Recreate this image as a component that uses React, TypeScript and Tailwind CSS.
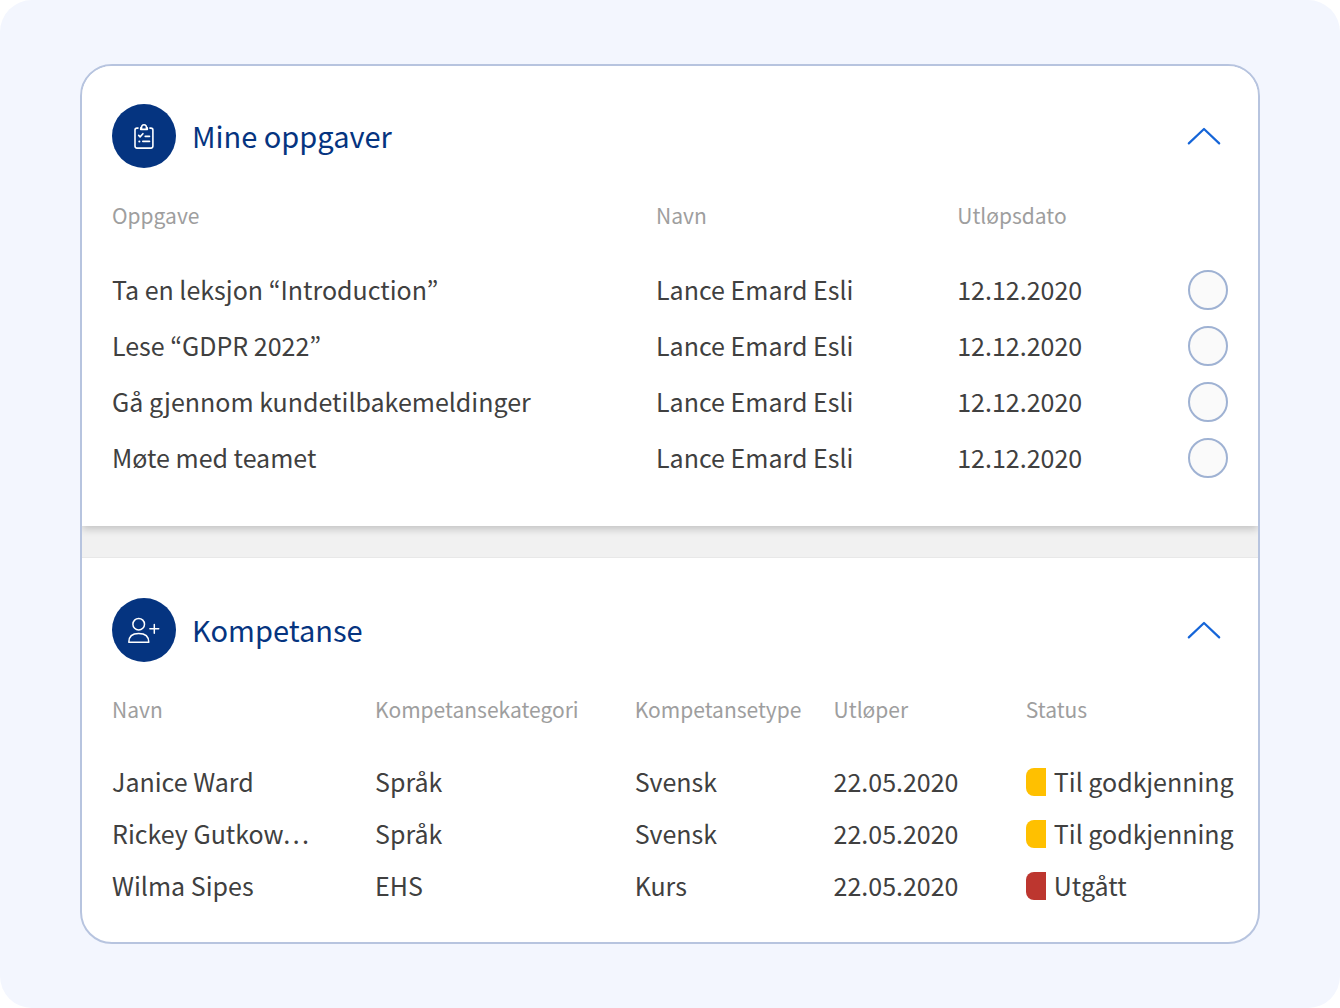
import type { ReactNode } from 'react';

const tasks = [
  { task: 'Ta en leksjon “Introduction”', name: 'Lance Emard Esli', due: '12.12.2020' },
  { task: 'Lese “GDPR 2022”', name: 'Lance Emard Esli', due: '12.12.2020' },
  { task: 'Gå gjennom kundetilbakemeldinger', name: 'Lance Emard Esli', due: '12.12.2020' },
  { task: 'Møte med teamet', name: 'Lance Emard Esli', due: '12.12.2020' },
];

const skills = [
  { name: 'Janice Ward', category: 'Språk', type: 'Svensk', expires: '22.05.2020', status: 'Til godkjenning', color: 'bg-[#ffc000]' },
  { name: 'Rickey Gutkow…', category: 'Språk', type: 'Svensk', expires: '22.05.2020', status: 'Til godkjenning', color: 'bg-[#ffc000]' },
  { name: 'Wilma Sipes', category: 'EHS', type: 'Kurs', expires: '22.05.2020', status: 'Utgått', color: 'bg-[#bd362f]' },
];

function ClipboardIcon() {
  return (
    <svg width="40" height="40" viewBox="0 0 40 40" fill="none" stroke="#fff" strokeWidth="1.6" strokeLinecap="round" strokeLinejoin="round" aria-hidden="true">
      <path d="M14 12.1h-1a2 2 0 0 0-2 2v16a2 2 0 0 0 2 2h13.9a2 2 0 0 0 2-2v-16a2 2 0 0 0-2-2h-1" />
      <path d="M16.7 13.4v-1.5h.9a2.5 2.5 0 1 1 4.8 0h.9v1.5z" />
      <path d="M14.7 19.4l1.4 1.5 2.8-3.2M21.2 20.4h4.3" />
      <path d="M18.8 25.4h6.7" />
      <path d="M15.3 25.4h.1" strokeWidth="2" />
    </svg>
  );
}

function UserPlusIcon() {
  return (
    <svg width="40" height="40" viewBox="0 0 40 40" fill="none" stroke="#fff" strokeWidth="1.5" strokeLinecap="round" strokeLinejoin="round" aria-hidden="true">
      <circle cx="14.7" cy="14.2" r="5.8" />
      <path d="M4.8 32.2c0-5.4 3.5-8.7 9.9-8.7s10.1 3.3 10.1 8.7z" />
      <path d="M30.3 14.4v8.8M25.9 18.8h8.8" />
    </svg>
  );
}

function SectionHeader({ title, icon }: { title: string; icon: ReactNode }) {
  return (
    <div className="flex items-center pr-2">
      <div className="flex size-16 shrink-0 items-center justify-center rounded-full bg-[#053480]">
        {icon}
      </div>
      <h2 className="ml-4 pb-0.5 text-[29px] leading-10 text-[#053480]">{title}</h2>
      <button type="button" aria-label={`Skjul ${title}`} className="ml-auto cursor-pointer">
        <svg width="48" height="32" viewBox="0 0 48 32" fill="none" stroke="#1565d8" strokeWidth="2.2" strokeLinecap="round" strokeLinejoin="round" aria-hidden="true">
          <path d="M8.8 23.4L24 9l15.2 14.4" />
        </svg>
      </button>
    </div>
  );
}

function Th({ children, className = '' }: { children?: ReactNode; className?: string }) {
  return <th scope="col" className={`h-[94px] p-0 font-normal ${className}`}>{children}</th>;
}

function App() {
  return (
    <main className="min-h-screen rounded-[32px] bg-[#f3f6fe] px-20 py-16 font-['Noto_Sans_CJK_KR','Noto_Sans',sans-serif]">
      <div className="overflow-hidden rounded-[32px] border-2 border-[#b7c4df] bg-white">
        <section className="relative bg-white pt-[38px] pr-[22px] pb-10 pl-[30px] shadow-[0_3px_8px_rgba(0,0,0,0.2)]">
          <SectionHeader title="Mine oppgaver" icon={<ClipboardIcon />} />
          <table className="w-full table-fixed text-left whitespace-nowrap">
            <thead className="text-[21px] leading-8 text-[#9e9e9e]">
              <tr>
                <Th className="w-[48.4%]">Oppgave</Th>
                <Th className="w-[26.8%]">Navn</Th>
                <Th>Utløpsdato</Th>
                <Th className="w-12" />
              </tr>
            </thead>
            <tbody className="text-[25px] leading-9 text-[#404040]">
              {tasks.map((item) => (
                <tr key={item.task}>
                  <td className="h-14 p-0 pb-0.5">{item.task}</td>
                  <td className="p-0 pb-0.5">{item.name}</td>
                  <td className="p-0 pb-0.5">{item.due}</td>
                  <td className="p-0">
                    <input
                      type="checkbox"
                      aria-label={item.task}
                      className="block size-10 appearance-none rounded-full border-2 border-[#9fb2d3] bg-[#fafafa] checked:bg-[#053480]"
                    />
                  </td>
                </tr>
              ))}
            </tbody>
          </table>
        </section>

        <div className="h-8 border-b border-[#e8e8e8] bg-[#f1f1f1]" />

        <section className="pt-10 pr-[22px] pb-[30px] pl-[30px]">
          <SectionHeader title="Kompetanse" icon={<UserPlusIcon />} />
          <table className="w-full table-fixed text-left whitespace-nowrap">
            <thead className="text-[21px] leading-8 text-[#9e9e9e]">
              <tr>
                <Th className="w-[23.4%]">Navn</Th>
                <Th className="w-[23.1%]">Kompetansekategori</Th>
                <Th className="w-[17.7%]">Kompetansetype</Th>
                <Th className="w-[17.1%]">Utløper</Th>
                <Th>Status</Th>
              </tr>
            </thead>
            <tbody className="text-[25px] leading-9 text-[#404040]">
              {skills.map((skill) => (
                <tr key={skill.name}>
                  <td className="h-[52px] p-0 pb-0.5">{skill.name}</td>
                  <td className="p-0 pb-0.5">{skill.category}</td>
                  <td className="p-0 pb-0.5">{skill.type}</td>
                  <td className="p-0 pb-0.5">{skill.expires}</td>
                  <td className="p-0">
                    <div className="flex items-center gap-2">
                      <span className={`h-7 w-5 shrink-0 rounded-l-lg ${skill.color}`} />
                      <span className="pb-0.5">{skill.status}</span>
                    </div>
                  </td>
                </tr>
              ))}
            </tbody>
          </table>
        </section>
      </div>
    </main>
  );
}

export default App;
